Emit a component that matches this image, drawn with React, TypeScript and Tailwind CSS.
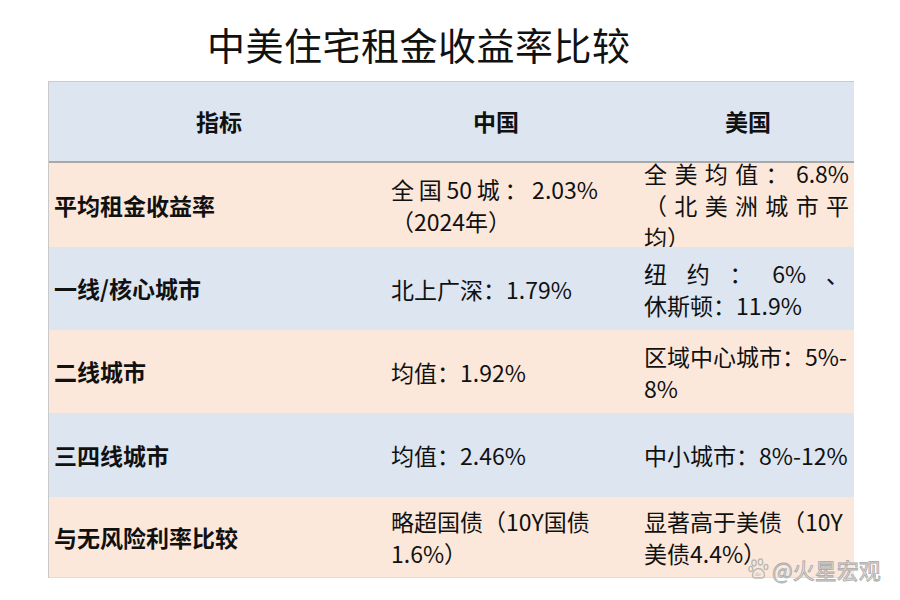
import React from 'react';

type Line = { text: string; justify?: boolean };
type Row = { label: string; cn: Line[]; us: Line[]; bg: string; h: string };

const ROWS: Row[] = [
  {
    label: '平均租金收益率',
    cn: [{ text: '全国50城：2.03%', justify: true }, { text: '（2024年）' }],
    us: [{ text: '全美均值：6.8%', justify: true }, { text: '（北美洲城市平', justify: true }, { text: '均）' }],
    bg: 'bg-[#fce8da]',
    h: 'h-[84px]',
  },
  {
    label: '一线/核心城市',
    cn: [{ text: '北上广深：1.79%' }],
    us: [{ text: '纽约：6%、', justify: true }, { text: '休斯顿：11.9%' }],
    bg: 'bg-[#dce5f0]',
    h: 'h-[83px]',
  },
  {
    label: '二线城市',
    cn: [{ text: '均值：1.92%' }],
    us: [{ text: '区域中心城市：5%-' }, { text: '8%' }],
    bg: 'bg-[#fce8da]',
    h: 'h-[83px]',
  },
  {
    label: '三四线城市',
    cn: [{ text: '均值：2.46%' }],
    us: [{ text: '中小城市：8%-12%' }],
    bg: 'bg-[#dce5f0]',
    h: 'h-[84px]',
  },
  {
    label: '与无风险利率比较',
    cn: [{ text: '略超国债（10Y国债' }, { text: '1.6%）' }],
    us: [{ text: '显著高于美债（10Y' }, { text: '美债4.4%）' }],
    bg: 'bg-[#fce8da]',
    h: 'h-[81px]',
  },
];

const Lines = ({ lines, width }: { lines: Line[]; width: string }) => (
  <div className={`${width} flex flex-col`}>
    {lines.map((l, i) => (
      <div
        key={i}
        className={`leading-[32px] whitespace-nowrap ${l.justify ? 'text-justify [text-align-last:justify]' : ''}`}
      >
        {l.text}
      </div>
    ))}
  </div>
);

const Paw = () => (
  <svg width="22" height="22" viewBox="0 0 22 22" fill="none" stroke="#b8b8b8" strokeWidth="1.4">
    <ellipse cx="6" cy="5" rx="2.2" ry="3" />
    <ellipse cx="12.5" cy="4" rx="2.2" ry="3" />
    <ellipse cx="2.8" cy="11" rx="1.9" ry="2.6" />
    <ellipse cx="18" cy="9" rx="1.9" ry="2.6" />
    <path d="M4.5 17.5 C4.5 13 8 10.5 10.5 10.5 C13.5 10.5 16.5 13.5 16.5 17 C16.5 20 14 20.5 10.5 19.8 C7 20.5 4.5 20 4.5 17.5 Z" />
    <text x="7" y="18" fontSize="5" fill="#b8b8b8" stroke="none" fontFamily="Liberation Sans, sans-serif">du</text>
  </svg>
);

export default function App() {
  return (
    <div
      className="relative w-[900px] h-[600px] bg-white text-[#111] overflow-hidden"
      style={{ fontFamily: '"Noto Sans CJK SC", "Noto Sans", sans-serif' }}
    >
      <h1 className="pl-[207px] pt-[24px] text-[38px] leading-[40px] font-normal tracking-[0.5px]">
        中美住宅租金收益率比较
      </h1>

      <div className="mt-[17px] ml-[48px] w-[806px] border-l border-[#c9c9c9] text-[23px]">
        {/* header */}
        <div className="flex h-[82px] items-center bg-[#dce5f0] border-t border-[#c5ccd4] border-b-2 border-b-[#a9a9a9] font-bold">
          <div className="w-[336px] pl-[147px]">指标</div>
          <div className="w-[253px] pl-[88px]">中国</div>
          <div className="flex-1 pl-[87px]">美国</div>
        </div>

        {ROWS.map((r, i) => (
          <div
            key={i}
            className={`flex items-center overflow-hidden ${r.bg} ${r.h} ${i === ROWS.length - 1 ? 'border-b border-[#e2dcd8]' : ''}`}
          >
            <div className="w-[336px] pl-[5px] font-bold">{r.label}</div>
            <div className="w-[253px] pl-[6px]">
              <Lines lines={r.cn} width="w-[207px]" />
            </div>
            <div className="flex-1 pl-[6px]">
              <Lines lines={r.us} width="w-[205px]" />
            </div>
          </div>
        ))}
      </div>

      {/* watermark */}
      <div className="absolute left-[748px] top-[556px] flex items-center gap-[2px]">
        <Paw />
        <span
          className="text-[22px] leading-[26px] text-[#e4e4e4]"
          style={{ WebkitTextStroke: '0.8px #a8a8a8' }}
        >
          @火星宏观
        </span>
      </div>
    </div>
  );
}
